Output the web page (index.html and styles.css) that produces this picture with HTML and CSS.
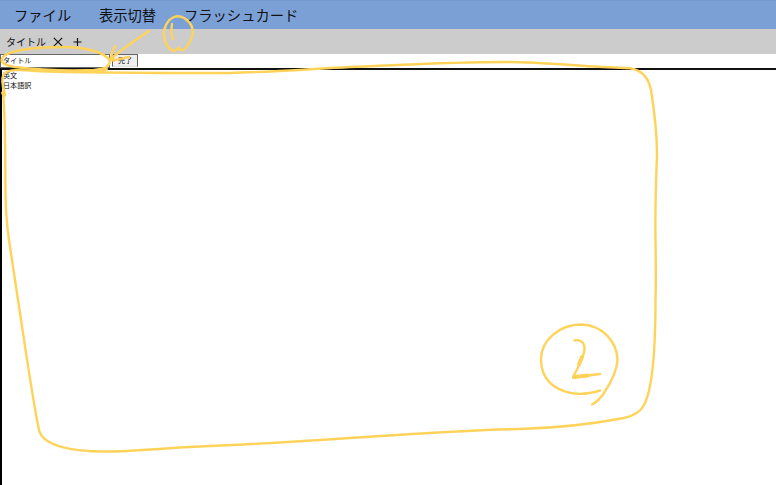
FILE: index.html
```
<!DOCTYPE html>
<html lang="ja">
<head>
<meta charset="utf-8">
<title>タイトル</title>
<link rel="stylesheet" href="styles.css">
</head>
<body>
<nav class="menu">
  <span>ファイル</span><span>表示切替</span><span>フラッシュカード</span>
</nav>
<div class="tabs">
  <span class="tab">タイトル</span>
  <svg class="close" viewBox="0 0 10 10"><path d="M.8.8 9.2 9.2M9.2.8.8 9.2"/></svg>
  <svg class="add" viewBox="0 0 10 10"><path d="M4.500 1v8M.5 5h8"/></svg>
</div>
<div class="edit">
  <div class="field">タイトル</div>
  <div class="done">完了</div>
</div>
<main class="doc">
  <p>英文</p>
  <p>日本語訳</p>
</main>
<svg class="notes" viewBox="0 0 776 485">
  <path d="M110 61C106 53 88 47 62 47C36 47 12 50 4 56C-1 61 2 65 15 67C38 70 70 71 98 70C106 69 110 66 110 60"/>
  <path d="M149 31C137 39 124 47 111 59M115 46C112 52 111 56 111 59C116 62 120 58 129 57"/>
  <path d="M174 17C167 20 163 29 164 36C165 44 169 50 174 51C177 51 178 47 179 48C181 51 184 51 187 46C192 40 194 33 192 27C189 20 181 14 174 17Z"/>
  <path d="M172 24C171 30 171 35 173 39"/>
  <path d="M5 95L3 86M5 95C2 86 1 76 5 73C9 69 22 70 36 71C80 73 170 73 229 73C270 72 310 69 350 67C400 65 450 62 507 62C545 62 585 67 625 68C639 68 648 75 651 90C655 115 657 135 657 155C656 180 655 210 655.500 240C656 270 656 285 655.500 300C655.500 350 652 390 644 405C640 413 633 416 624 418C592 424 556 428 520 429C460 430 400 435 350 438C290 442 240 445 190 447C155 449 130 451.500 104 451.500C76 451.500 43 447 39 430C32 397 25 345 15 280C9 240 6 225 5.500 195C5 160 6 125 3 92"/>
  <path d="M600 390.500C570 400 541 388 541 359C541 340 560 324.500 581 324.500C602 325 617 341 617.500 360C617 370 610 384 604 393C600 399 597 402 592 404.500"/>
  <path d="M574.500 340.500C581 339 585 343 584.500 350C583 361 575 372 573 377.500L600 374"/>
  <path class="bold" d="M582 357L579 364M574 377L588 375.500M93 71L106 69M3 93L4 95M111 59L114 60"/>
</svg>
</body>
</html>
```
FILE: styles.css
```
* { box-sizing: border-box; }
body {
  margin: 0;
  height: 485px;
  display: flex;
  flex-direction: column;
  position: relative;
  overflow: hidden;
  background: #fff;
  color: #111;
  font-family: "Noto Sans CJK JP", sans-serif;
}
.menu {
  height: 29px;
  padding: 0 14px 1px;
  display: flex;
  align-items: center;
  gap: 27.8px;
  background: #7aa0d6;
  border-top: 1px solid #7398cd;
  font-size: 14.3px;
  line-height: 20px;
}
.tabs {
  height: 25px;
  padding-left: 6px;
  display: flex;
  align-items: center;
  background: #ccc;
  font-size: 10px;
}
.tab { line-height: 16px; padding-top: 1px; }
.tabs svg { fill: none; stroke: #111; stroke-width: 1.2; }
.close { width: 10px; height: 10px; margin-left: 7px; }
.add { width: 10px; height: 10px; margin-left: 10px; }
.edit {
  height: 14px;
  display: flex;
  gap: 2px;
  font-size: 7.1px;
  line-height: 10px;
}
.field {
  width: 110px;
  padding-left: 2px;
  border: 1px solid #666;
}
.done {
  width: 26px;
  height: 13px;
  border: 1px solid #666;
  border-bottom-color: #ddd;
  background: #efefef;
  text-align: center;
}
.doc {
  flex: 1;
  border-top: 2px solid #111;
  border-left: 2px solid #000;
  padding-left: 1px;
  font-size: 7.1px;
  line-height: 10px;
}
.doc p { margin: 0; }
.notes {
  position: absolute;
  inset: 0;
  width: 776px;
  height: 485px;
  fill: none;
  stroke: #ffd35a;
  stroke-width: 2.4;
  stroke-linecap: round;
  stroke-linejoin: round;
}
.bold { stroke-width: 3.8; }
```
